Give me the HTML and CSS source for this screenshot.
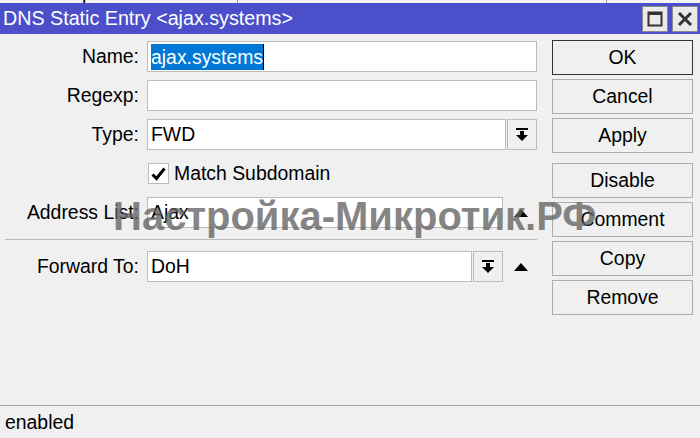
FILE: index.html
```html
<!DOCTYPE html>
<html lang="ru">
<head>
<meta charset="utf-8">
<title>DNS Static Entry</title>
<link rel="stylesheet" href="styles.css">
</head>
<body>
<div class="window">
  <div class="behind">
    <span class="behind-text">aDNS Repeater Interfaces:</span>
    <span class="behind-field"></span>
  </div>

  <div class="titlebar">
    <span class="title">DNS Static Entry &lt;ajax.systems&gt;</span>
    <div class="title-btns">
      <button class="tbtn" aria-label="Maximize">
        <svg width="16" height="16" viewBox="0 0 16 16"><rect x="1.5" y="1.5" width="13" height="13" fill="none" stroke="#333" stroke-width="2"/><rect x="1" y="1" width="14" height="3" fill="#333"/></svg>
      </button>
      <button class="tbtn" aria-label="Close">
        <svg width="16" height="16" viewBox="0 0 16 16"><path d="M2 2 L14 14 M14 2 L2 14" stroke="#333" stroke-width="3"/></svg>
      </button>
    </div>
  </div>

  <div class="body">
    <div class="form">
      <div class="row">
        <label class="lbl">Name:</label>
        <div class="field"><span class="input"><span class="sel">ajax.systems</span><span class="caret"></span></span></div>
      </div>
      <div class="row">
        <label class="lbl">Regexp:</label>
        <div class="field"><span class="input"></span></div>
      </div>
      <div class="row">
        <label class="lbl">Type:</label>
        <div class="field">
          <span class="input">FWD</span>
          <span class="dd">
            <svg width="12" height="14" viewBox="0 0 12 14"><rect x="0" y="0" width="12" height="2" fill="#000"/><rect x="4" y="3" width="4" height="5" fill="#000"/><path d="M0 7 H12 L6 13 Z" fill="#000"/></svg>
          </span>
        </div>
      </div>
      <div class="row">
        <span class="lbl"></span>
        <div class="field check-field">
          <span class="checkbox">
            <svg width="15" height="14" viewBox="0 0 15 14"><path d="M1.5 7.5 L5.5 11.5 L13.5 1.5" fill="none" stroke="#000" stroke-width="3"/></svg>
          </span>
          <span class="check-text">Match Subdomain</span>
        </div>
      </div>
      <div class="row">
        <label class="lbl">Address List:</label>
        <div class="field">
          <span class="input">Ajax</span>
          <span class="up"><span class="tri"></span></span>
        </div>
      </div>
      <div class="sep"></div>
      <div class="row">
        <label class="lbl">Forward To:</label>
        <div class="field">
          <span class="input">DoH</span>
          <span class="dd">
            <svg width="12" height="14" viewBox="0 0 12 14"><rect x="0" y="0" width="12" height="2" fill="#000"/><rect x="4" y="3" width="4" height="5" fill="#000"/><path d="M0 7 H12 L6 13 Z" fill="#000"/></svg>
          </span>
          <span class="up"><span class="tri"></span></span>
        </div>
      </div>
    </div>

    <div class="actions">
      <div class="group">
        <button class="btn default">OK</button>
        <button class="btn">Cancel</button>
        <button class="btn">Apply</button>
      </div>
      <div class="group">
        <button class="btn">Disable</button>
        <button class="btn">Comment</button>
        <button class="btn">Copy</button>
        <button class="btn">Remove</button>
      </div>
    </div>
  </div>

  <div class="status">enabled</div>

  <div class="watermark">Настройка-Микротик.РФ</div>
</div>
</body>
</html>
```

FILE: styles.css
```css
* { box-sizing: border-box; }

html, body {
  margin: 0;
  padding: 0;
  background: #f0f0f0;
}

body {
  font-family: "Liberation Sans", Arial, sans-serif;
  font-size: 19.4px;
  color: #000;
}

.window {
  position: relative;
  width: 700px;
  height: 438px;
  display: flex;
  flex-direction: column;
  overflow: hidden;
  background: #f0f0f0;
}

/* sliver of the parent window above the dialog */
.behind {
  height: 3px;
  display: flex;
  overflow: hidden;
  background: #f4f4f4;
}
.behind-text {
  width: 238px;
  line-height: 22px;
  margin-top: -19px;
  white-space: nowrap;
  border-right: 1px solid #9a9a9a;
}
.behind-field {
  width: 369px;
  border-right: 1px solid #9a9a9a;
}

.titlebar {
  height: 31px;
  background: #4b4fc9;
  display: flex;
  align-items: center;
  justify-content: space-between;
  padding: 0 2px 0 3px;
}
.title {
  color: #fff;
  font-size: 19.7px;
  white-space: nowrap;
}
.title-btns {
  display: flex;
  gap: 4px;
}
.tbtn {
  width: 26px;
  height: 26px;
  padding: 0;
  border: 1px solid #8a8a8a;
  background: #ebe9ea;
  display: flex;
  align-items: center;
  justify-content: center;
}

.body {
  flex: 1;
  display: flex;
  align-items: flex-start;
}

.form {
  width: 537px;
  padding-top: 7px;
  display: flex;
  flex-direction: column;
  gap: 8px;
}

.row {
  display: grid;
  grid-template-columns: 139px 1fr;
  column-gap: 8px;
  height: 31px;
  align-items: center;
}

.lbl {
  text-align: right;
  white-space: nowrap;
}

.field {
  display: flex;
  height: 31px;
  gap: 1px;
}

.input {
  flex: 1;
  height: 31px;
  background: #fff;
  border: 1px solid #bcbcbc;
  padding-left: 3px;
  display: flex;
  align-items: center;
  white-space: nowrap;
}

.sel {
  background: #0078d7;
  color: #fff;
  line-height: 26px;
}
.caret {
  width: 1px;
  height: 26px;
  background: #000;
}

.dd {
  width: 30px;
  height: 31px;
  border: 1px solid #bcbcbc;
  background: #f0f0f0;
  display: flex;
  align-items: center;
  justify-content: center;
}

.up {
  width: 33px;
  display: flex;
  align-items: center;
  justify-content: center;
}
.tri {
  width: 0;
  height: 0;
  border-left: 7px solid transparent;
  border-right: 7px solid transparent;
  border-bottom: 8px solid #000;
}

.check-field {
  align-items: center;
  gap: 5px;
  padding-left: 1px;
}
.checkbox {
  width: 21px;
  height: 21px;
  background: #fff;
  border: 1px solid #bcbcbc;
  display: flex;
  align-items: center;
  justify-content: center;
}

.sep {
  height: 1px;
  margin: 3px 0 3px 5px;
  background: #b8b8b8;
}

.actions {
  width: 141px;
  margin-left: 15px;
  padding-top: 6px;
  display: flex;
  flex-direction: column;
  gap: 10px;
}
.group {
  display: flex;
  flex-direction: column;
  gap: 4px;
}
.btn {
  height: 35px;
  border: 1px solid #adadad;
  background: #f0f0f0;
  font-family: inherit;
  font-size: 19.4px;
  color: #000;
  padding: 0;
}
.btn.default {
  border-color: #333;
}

.status {
  height: 33px;
  border-top: 1px solid #a8a8a8;
  padding-left: 5px;
  display: flex;
  align-items: center;
}

.watermark {
  position: absolute;
  left: 113px;
  top: 194px;
  font-size: 40px;
  font-weight: bold;
  color: rgba(100, 100, 100, 0.78);
  white-space: nowrap;
  pointer-events: none;
}
```
